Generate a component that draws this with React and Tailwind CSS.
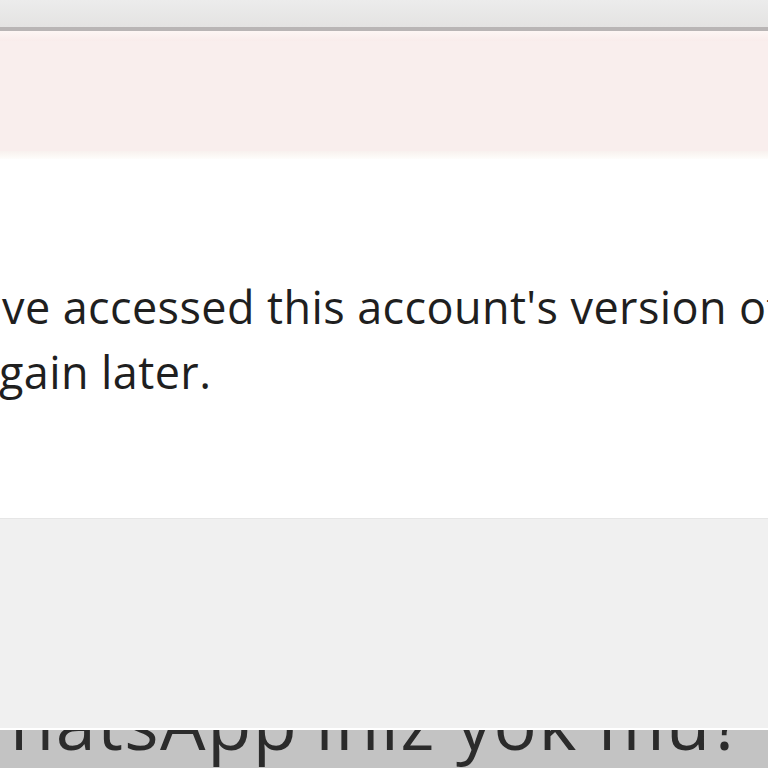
export default function App() {
  return (
    <div className="h-[768px] w-[768px] overflow-hidden flex flex-col bg-white">
      {/* window chrome */}
      <div className="h-[27px] bg-gradient-to-b from-[#ececec] to-[#e4e3e2]" />
      <div className="h-[4px] bg-[#b9b5b5]" />
      {/* notice band */}
      <div className="h-[10px] bg-gradient-to-b from-[#fdf6f4] to-[#f9eceb]" />
      <div className="h-[110px] bg-[#f9eeed]" />
      <div className="h-[8px] bg-gradient-to-b from-[#f8f1ee] to-[#fefdfb]" />
      {/* message */}
      <div className="h-[359px] bg-white overflow-hidden font-['Open_Sans',sans-serif] text-[45px] leading-[65px] tracking-[0.4px] text-[#1f1f1f] pt-[115px]">
        <p className="whitespace-nowrap pl-[2px]">ve accessed this account's version of</p>
        <p className="whitespace-nowrap -ml-[1px]">gain later.</p>
      </div>
      {/* footer panel */}
      <div className="h-[210px] bg-[#f0f0f0] border-t border-[#e6e6e6]" />
      <div className="h-[2px] bg-white" />
      <div className="h-[38px] shrink-0 bg-[#c3c3c3] overflow-hidden">
        <p className="whitespace-nowrap -mt-[44px] -ml-[58px] font-['Open_Sans',sans-serif] text-[72px] leading-[72px] tracking-[1.5px] text-[#2b2b2b]">
          WhatsApp'ınız yok mu?
        </p>
      </div>
    </div>
  );
}
